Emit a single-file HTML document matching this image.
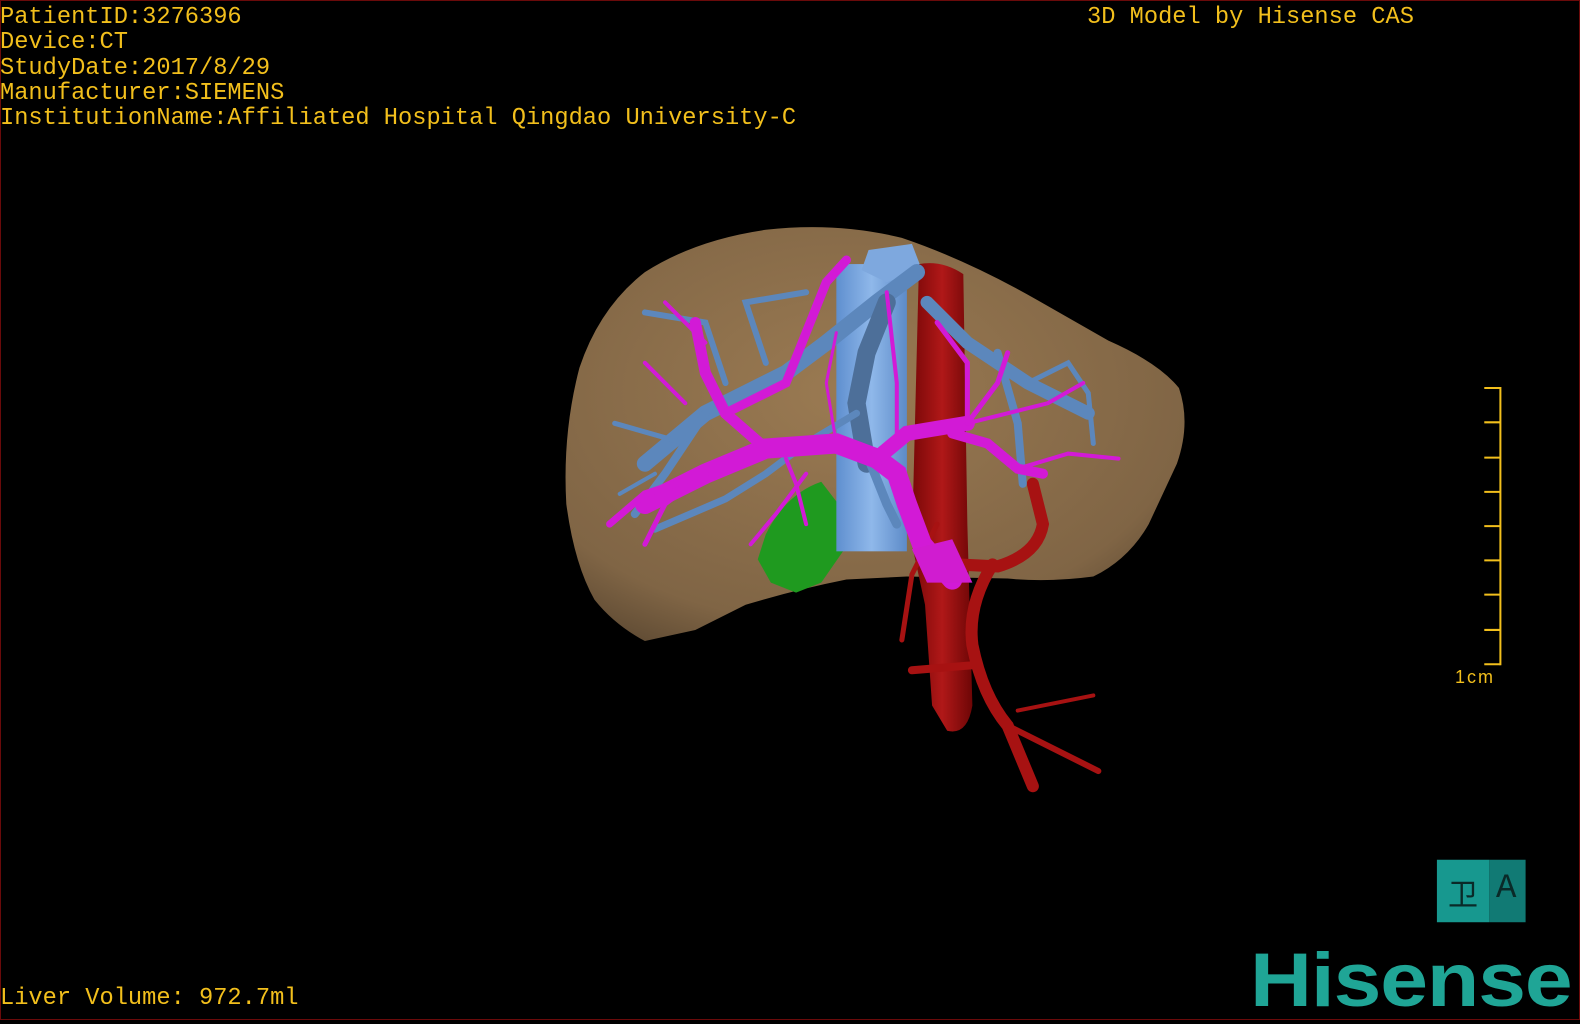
<!DOCTYPE html>
<html><head><meta charset="utf-8"><style>
html,body{margin:0;padding:0;background:#000;}
body{width:1580px;height:1020px;position:relative;overflow:hidden;}
.frame{position:absolute;left:0;top:0;width:1578px;height:1018px;border:1px solid #6a0a0a;}
.t{position:absolute;font-family:"Liberation Mono",monospace;font-size:23.7px;color:#f2bf1c;white-space:pre;line-height:25.3px;}
svg{position:absolute;left:0;top:0;}
.logo{position:absolute;left:1250px;top:937px;font-family:"Liberation Sans",sans-serif;font-weight:bold;font-size:76px;color:#1fa596;transform:scaleX(1.13);transform-origin:left top;letter-spacing:-1px;}
</style></head><body>
<svg width="1580" height="1020" viewBox="0 0 1568 1012" preserveAspectRatio="none">
<defs>
<radialGradient id="lv" cx="0.45" cy="0.4" r="0.7"><stop offset="0" stop-color="#9a7a52"/><stop offset="0.8" stop-color="#806545"/><stop offset="1" stop-color="#5e4a33"/></radialGradient>
<linearGradient id="ivc" x1="0" x2="1"><stop offset="0" stop-color="#5f8fcf"/><stop offset="0.5" stop-color="#8fb8ea"/><stop offset="1" stop-color="#5d8bc8"/></linearGradient>
<linearGradient id="ao" x1="0" x2="1"><stop offset="0" stop-color="#7a0808"/><stop offset="0.5" stop-color="#b01818"/><stop offset="1" stop-color="#6e0606"/></linearGradient>
</defs>
<path d="M640 636 Q610 620 590 595 Q570 560 562 500 Q558 430 575 365 Q595 305 640 270 Q690 238 760 228 Q830 220 895 236 Q960 258 1030 298 L1100 338 Q1150 360 1170 385 Q1182 420 1168 460 L1140 520 Q1120 555 1085 572 Q1040 578 1000 574 L900 572 L840 575 Q790 585 740 600 L690 625 Z" fill="url(#lv)"/>
<path d="M760 530 Q780 490 815 478 L832 500 L838 545 L815 578 L790 588 L765 578 L752 555 Z" fill="#1f9a1f"/>
<rect x="830" y="262" width="70" height="285" fill="url(#ivc)"/>
<path d="M862 248 L905 242 L915 268 L880 280 L855 268 Z" fill="#7ea8de"/>
<path d="M912 262 Q935 258 956 272 L960 520 L965 700 Q960 730 940 725 L925 700 L918 600 L905 540 Z" fill="url(#ao)"/>
<g fill="none" stroke-linecap="round" stroke="#a71212">
<path d="M985 560 Q960 600 965 640 Q975 690 1000 720 L1025 780" stroke-width="12"/>
<path d="M1000 720 L1090 765" stroke-width="6"/>
<path d="M1010 705 L1085 690" stroke-width="4"/>
<path d="M965 660 L905 665" stroke-width="8"/>
<path d="M930 520 L905 570 L895 635" stroke-width="5"/>
<path d="M1025 480 L1035 520 Q1030 550 990 562 L950 560" stroke-width="12"/>
</g>
<g fill="none" stroke="#5c87bc" stroke-linecap="round">
<path d="M640 460 L700 410 L780 370 L820 340 L870 300 L910 270" stroke-width="16"/>
<path d="M880 300 L860 350 L850 400 L860 460" stroke-width="18" stroke="#4d6f99"/>
<path d="M920 300 L960 340 L1020 380 L1080 410" stroke-width="13"/>
<path d="M990 350 L1010 420 L1015 480" stroke-width="8"/>
<path d="M700 410 L660 470 L630 510" stroke-width="8"/>
<path d="M680 440 L610 420" stroke-width="5"/>
<path d="M720 380 L700 320 L640 310" stroke-width="6"/>
<path d="M760 360 L740 300 L800 290" stroke-width="6"/>
<path d="M850 410 L800 440 L760 470 L720 495 L650 525" stroke-width="7"/>
<path d="M860 450 L880 500 L890 520" stroke-width="9"/>
<path d="M1020 380 L1060 360 L1080 390 L1085 440" stroke-width="5"/>
<path d="M650 470 L615 490" stroke-width="4"/>
</g>
<g fill="none" stroke="#d21ad6" stroke-linecap="round">
<path d="M640 500 L700 470 L760 445 L830 440 L870 455 L890 470 L900 500 L915 540 L945 575" stroke-width="20"/>
<path d="M870 455 L900 430 L930 425 L960 420" stroke-width="15"/>
<path d="M945 430 L980 440 L1010 465 L1035 470" stroke-width="10"/>
<path d="M760 445 L720 410 L700 370 L690 320" stroke-width="11"/>
<path d="M720 410 L780 380 L800 330 L820 280 L840 258" stroke-width="9"/>
<path d="M700 470 L640 490 L605 520" stroke-width="7"/>
<path d="M700 470 L660 500 L640 540" stroke-width="5"/>
<path d="M680 400 L640 360" stroke-width="4"/>
<path d="M700 340 L660 300" stroke-width="4"/>
<path d="M960 420 L990 380 L1000 350" stroke-width="5"/>
<path d="M960 420 L960 360 L930 320" stroke-width="5"/>
<path d="M1010 465 L1060 450 L1110 455" stroke-width="4"/>
<path d="M960 420 L1040 400 L1075 380" stroke-width="4"/>
<path d="M880 290 L890 380 L890 440" stroke-width="4"/>
<path d="M800 520 L790 480 L780 455" stroke-width="4"/>
<path d="M830 440 L820 380 L830 330" stroke-width="3"/>
<path d="M745 540 L770 510 L800 470" stroke-width="4"/>
</g>
<path d="M905 545 L945 535 L965 578 L920 578 Z" fill="#d01cd0"/>
<g stroke="#f2bf1c" stroke-width="2">
<line x1="1489" y1="384" x2="1489" y2="660"/>
<line x1="1473" y1="385" x2="1489" y2="385"/><line x1="1473" y1="419" x2="1489" y2="419"/><line x1="1473" y1="454" x2="1489" y2="454"/><line x1="1473" y1="488" x2="1489" y2="488"/><line x1="1473" y1="522" x2="1489" y2="522"/><line x1="1473" y1="556" x2="1489" y2="556"/><line x1="1473" y1="590" x2="1489" y2="590"/><line x1="1473" y1="625" x2="1489" y2="625"/><line x1="1473" y1="659" x2="1489" y2="659"/>
</g>
<rect x="1426" y="853" width="52" height="62" fill="#17988f"/>
<rect x="1478" y="853" width="36" height="62" fill="#117a74"/>
</svg>
<div class="frame"></div>
<div class="t" style="left:0;top:5px">PatientID:3276396
Device:CT
StudyDate:2017/8/29
Manufacturer:SIEMENS
InstitutionName:Affiliated Hospital Qingdao University-C</div>
<div class="t" style="left:1087px;top:5px">3D Model by Hisense CAS</div>
<div class="t" style="left:0;top:986px">Liver Volume: 972.7ml</div>
<div style="position:absolute;left:1455px;top:667px;font-family:'Liberation Sans',sans-serif;font-size:18px;color:#f2bf1c;letter-spacing:2px">1cm</div>
<div style="position:absolute;left:1448px;top:870px;font-family:'Liberation Sans','Noto Sans CJK SC',sans-serif;font-size:30px;color:#0a2a28">卫</div>
<div style="position:absolute;left:1496px;top:870px;font-family:'Liberation Mono',monospace;font-size:34px;color:#0a2a28">A</div>
<div class="logo">Hisense</div>
</body></html>
